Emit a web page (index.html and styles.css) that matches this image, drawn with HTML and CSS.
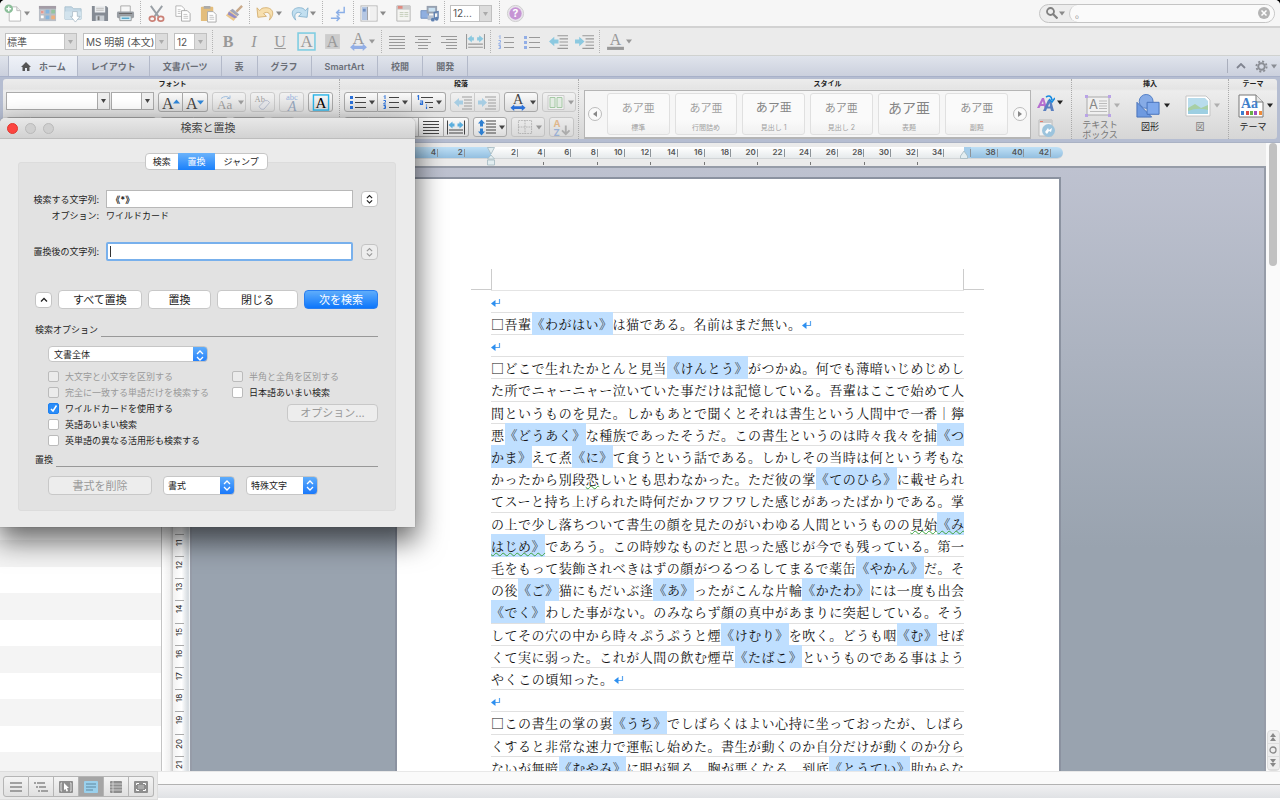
FILE: index.html
```html
<!DOCTYPE html>
<html lang="ja">
<head>
<meta charset="utf-8">
<title>検索と置換</title>
<link rel="stylesheet" href="styles.css">
</head>
<body>
<svg class="sprite" aria-hidden="true">
  <symbol id="caret" viewBox="0 0 6 5"><path d="M0 .5h6L3 4.5z" fill="currentColor"/></symbol>
  <symbol id="updown" viewBox="0 0 8 10"><path d="M1 4l3-3 3 3M1 6.500l3 3 3-3" fill="none" stroke="currentColor" stroke-width="1.300"/></symbol>
  <symbol id="new" viewBox="0 0 20 20"><path d="M5.500 3h8l4 4v11h-12z" fill="#fff" stroke="#bbb"/><path d="M13.500 3v4h4" fill="#eee" stroke="#bbb"/><circle cx="5" cy="5" r="4.500" fill="#8cbf9a"/><path d="M5 2.500v5M2.500 5h5" stroke="#fff" stroke-width="1.600"/></symbol>
  <symbol id="gallery" viewBox="0 0 20 20"><rect x="1" y="2" width="18" height="16" fill="#b9bec6"/><path d="M1 2h18v3H1z" fill="#a39ca6"/><path d="M3 7h3v3H3zM3 12h3v3H3z" fill="#fff"/><path d="M8 6h4v4H8zM8 12h4v4H8z" fill="#85b5df"/><path d="M14 6h4v4h-4z" fill="#93c49e"/><path d="M14 12h4v4h-4z" fill="#edb07e"/><path d="M3 7h3v3H3z" fill="#e59a90"/></symbol>
  <symbol id="open" viewBox="0 0 20 20"><path d="M1 3h7l2 2h8v11H1z" fill="#c5d9e6" stroke="#a9c1d0"/><path d="M1 8h17v8H1z" fill="#d2e3ed"/><path d="M9 8h5v5h3l-5 6-5-6h2z" fill="#fff" stroke="#a7b8c4" stroke-width=".8"/></symbol>
  <symbol id="save" viewBox="0 0 20 20"><path d="M2 2h15l2 2v14H2z" fill="#858b94"/><path d="M5 2h11v7H5z" fill="#eceef0"/><path d="M6 12h9v6H6z" fill="#c9ced4"/><path d="M8 13h2v4H8z" fill="#777"/><path d="M6.500 4.500h8M6.500 6.500h8" stroke="#bbb"/></symbol>
  <symbol id="print" viewBox="0 0 20 20"><path d="M5 2h10v7H5z" fill="#f7f7f7" stroke="#aaa"/><rect x="1" y="8" width="18" height="7" rx="1.500" fill="#9a9fa5"/><path d="M3 10h14" stroke="#666"/><path d="M4 12.500h12v5H4z" fill="#d5ecf5" stroke="#999"/><path d="M6 15h8" stroke="#5aa9cc" stroke-width="1.500"/></symbol>
  <symbol id="cut" viewBox="0 0 20 20"><path d="M4 2l8 11M16 2L8 13" stroke="#9aa0a6" stroke-width="2"/><ellipse cx="5.500" cy="15.500" rx="3" ry="2.500" fill="none" stroke="#cb8076" stroke-width="1.800"/><ellipse cx="14.500" cy="15.500" rx="3" ry="2.500" fill="none" stroke="#cb8076" stroke-width="1.800"/></symbol>
  <symbol id="copy" viewBox="0 0 20 20"><path d="M3 2h6l3 3v8H3z" fill="#fff" stroke="#b5b5b5"/><path d="M9 7h6l3 3v8H9z" fill="#fff" stroke="#aaa"/><path d="M5 6h3M5 8h3M5 10h3M11 11h4M11 13h5M11 15h5" stroke="#c5c5c5"/></symbol>
  <symbol id="paste" viewBox="0 0 20 20"><rect x="2" y="3" width="13" height="15" rx="1" fill="#e3bd7c"/><path d="M5 2h7v3H5z" fill="#aaa"/><path d="M9 8h6l3 3v8H9z" fill="#fff" stroke="#aaa"/><path d="M11 12h4M11 14h5M11 16h5" stroke="#c5c5c5"/></symbol>
  <symbol id="brush" viewBox="0 0 20 20"><path d="M18 2l-6 6" stroke="#c9a98a" stroke-width="2.500"/><path d="M8 5l7 6-2 2-8-6z" fill="#a3a6b8"/><path d="M5 7l8 6-4 5-8-6z" fill="#ebc78e"/><path d="M4 8l9 6-3 1-7-4z" fill="#938cc8"/></symbol>
  <symbol id="undo" viewBox="0 0 20 20"><path d="M1 4l1 10 9-1-3-3c4-3 9 0 6 7 7-7 3-14-5-13-2 0-4 1-5 3z" fill="#f7dfae" stroke="#d2ab6a" stroke-width=".9"/></symbol>
  <symbol id="redo" viewBox="0 0 20 20"><path d="M19 4l-1 10-9-1 3-3c-4-3-9 0-6 7-7-7-3-14 5-13 2 0 4 1 5 3z" fill="#c2dff0" stroke="#82b0cc" stroke-width=".9"/></symbol>
  <symbol id="marks" viewBox="0 0 20 20"><path d="M16 3v6H8M11 6L8 9l3 3M2 15h9M8 12l3 3-3 3" fill="none" stroke="#8aaee6" stroke-width="1.500"/></symbol>
  <symbol id="panel" viewBox="0 0 20 20"><rect x="1" y="2" width="17" height="16" fill="#fff" stroke="#b5b5b5"/><path d="M2 3h6v14H2z" fill="#b5c7e3"/><path d="M3 5h3v3H3z" fill="#6f8fc2"/><path d="M8 3v14" stroke="#999"/><path d="M10 3h7v14h-7z" fill="#f0f0f0"/></symbol>
  <symbol id="docbox" viewBox="0 0 20 20"><path d="M3 2h14v16H3z" fill="#f4f4f1" stroke="#b5b5b5"/><path d="M3 2h14v4H3z" fill="#ccc"/><path d="M4 2h5v3H4z" fill="#df8b81"/><path d="M6 9h4M11 9h4M6 11h4M11 11h4M6 13h4M11 13h4" stroke="#c4ceb9"/></symbol>
  <symbol id="media" viewBox="0 0 20 20"><path d="M1 7h8v8H1z" fill="#8fafe0" stroke="#7593c0"/><path d="M7 2h11v8H7z" fill="#97a1b0"/><path d="M9 4h7v4H9z" fill="#c9e1f2"/><path d="M8 12h6v5H8z" fill="#b9c3d1"/><path d="M15 16V9l4-1v7" fill="none" stroke="#5f80b0" stroke-width="1.500"/><circle cx="13.500" cy="16.500" r="2" fill="#5f80b0"/><circle cx="17.500" cy="15.500" r="2" fill="#5f80b0"/></symbol>
  <symbol id="help" viewBox="0 0 20 20"><circle cx="10" cy="10" r="8.500" fill="#e9e4ec" stroke="#ccc"/><circle cx="10" cy="10" r="6.500" fill="#c694d4"/><text x="10" y="14" font-size="11" text-anchor="middle" font-weight="bold" fill="#fff">?</text></symbol>
  <symbol id="lines" viewBox="0 0 16 14"><path d="M0 1.500h16M0 4.500h16M0 7.500h16M0 10.500h16M0 13.500h16" stroke="currentColor"/></symbol>
  <symbol id="linesc" viewBox="0 0 16 14"><path d="M0 1.500h16M3 4.500h10M0 7.500h16M3 10.500h10M3 13.500h10" stroke="currentColor"/></symbol>
  <symbol id="linesr" viewBox="0 0 16 14"><path d="M0 1.500h16M5 4.500h11M0 7.500h16M5 10.500h11M5 13.500h11" stroke="currentColor"/></symbol>
  <symbol id="dist" viewBox="0 0 18 14"><path d="M.5 0v14M17.500 0v14M2 9.500h14M2 12.500h14" stroke="currentColor"/><path d="M1.500 4.500l4-3.500v2h2v3h-2v2zM16.500 4.500l-4-3.500v2h-2v3h2v2z" fill="var(--arrow)"/></symbol>
  <symbol id="numlist" viewBox="0 0 16 14"><path d="M6 2.500h10M6 7.500h10M6 12.500h10" stroke="currentColor"/><path d="M1 1.500l1-1V4M.5 5.500h2v1.500l-2 2h2.500M.5 10.500h2v3h-2M1 12h1.500" fill="none" stroke="var(--blue)"/></symbol>
  <symbol id="bullets" viewBox="0 0 16 14"><path d="M5 2.500h11M5 7.500h11M5 12.500h11" stroke="currentColor"/><path d="M0 1h3v3H0zM0 6h3v3H0zM0 11h3v3H0z" fill="var(--blue)"/></symbol>
  <symbol id="multi" viewBox="0 0 16 14"><path d="M4 2.500h12M8 7.500h8M12 12.500h4" stroke="currentColor"/><path d="M.5 1.500l1-1V5M3 6h2.500v3.500H3.500V8h2M9.500 9.500v1M9.500 11.500V14" fill="none" stroke="var(--blue)" stroke-width="1.200"/></symbol>
  <symbol id="outdent" viewBox="0 0 18 14"><path d="M8 1.500h10M10 4.500h8M10 7.500h8M10 10.500h8M8 13.500h10" stroke="currentColor"/><path d="M0 7l5-4.500V5h4v4H5v2.500z" fill="var(--arrow)"/></symbol>
  <symbol id="indent" viewBox="0 0 18 14"><path d="M7 1.500h11M10 4.500h8M10 7.500h8M10 10.500h8M7 13.500h11" stroke="currentColor"/><path d="M9 7L4 2.500V5H0v4h4v2.500z" fill="var(--arrow)"/></symbol>
  <symbol id="awide" viewBox="0 0 16 18"><text x="8" y="11" font-family="Liberation Serif" font-size="15" text-anchor="middle" fill="currentColor">A</text><path d="M0 14.500l4-3.500v2h8v-2l4 3.500-4 3.500v-2H4v2z" fill="var(--blue)"/></symbol>
  <symbol id="acolor" viewBox="0 0 18 18"><text x="9" y="12" font-family="Liberation Serif" font-size="15" text-anchor="middle" fill="currentColor">A</text><path d="M1 14h16v3H1z" fill="currentColor"/></symbol>
  <symbol id="abox" viewBox="0 0 18 18"><rect x="1" y="1" width="16" height="16" fill="none" stroke="var(--cyan)" stroke-width="1.500"/><text x="9" y="14.500" font-family="Liberation Serif" font-size="16" text-anchor="middle" fill="currentColor">A</text></symbol>
  <symbol id="ashade" viewBox="0 0 18 18"><path d="M2 2h14v14H2z" fill="#ccc"/><text x="9" y="14" font-family="Liberation Serif" font-size="15" text-anchor="middle" fill="currentColor">A</text></symbol>
  <symbol id="agrow" viewBox="0 0 18 16"><text x="0" y="14" font-family="Liberation Serif" font-size="16" fill="currentColor">A</text><path d="M11 9h7l-3.500-4z" fill="#2f86d8"/></symbol>
  <symbol id="ashrink" viewBox="0 0 18 16"><text x="0" y="14" font-family="Liberation Serif" font-size="16" fill="currentColor">A</text><path d="M11 6h7l-3.500 4z" fill="#2f86d8"/></symbol>
  <symbol id="acase" viewBox="0 0 18 16"><text x="0" y="14" font-family="Liberation Serif" font-size="13" fill="currentColor">Aa</text><path d="M4 4q5-4 9 0M13 1v3h-3" fill="none" stroke="#4a8bd0"/></symbol>
  <symbol id="eraser" viewBox="0 0 18 18"><text x="0" y="8" font-family="Liberation Serif" font-size="9" fill="currentColor">Ab</text><path d="M5 13l6-6q3-1 5 2l-6 7q-4 1-5-3z" fill="#e8eaf2" stroke="#7787ad"/></symbol>
  <symbol id="ruby" viewBox="0 0 18 18"><text x="9" y="6" font-family="Liberation Serif" font-size="9" text-anchor="middle" fill="#2c6fd0">abc</text><text x="9" y="18" font-family="Liberation Serif" font-size="15" font-style="italic" text-anchor="middle" fill="#34598c">A</text></symbol>
  <symbol id="columns" viewBox="0 0 18 16"><path d="M1 1h16v14H1z" fill="#fff" stroke="#aaa"/><path d="M3 3h5v10H3zM10 3h5v10h-5z" fill="#dff0df" stroke="#52a552"/></symbol>
  <symbol id="spacing" viewBox="0 0 18 16"><path d="M8 1.500h10M8 4.500h10M8 7.500h10M8 10.500h10M8 13.500h10" stroke="currentColor"/><path d="M3.500 0l3.500 4H5v3H2V4H0zM3.500 16L0 12h2V9h3v3h2z" fill="#2f7fd0"/></symbol>
  <symbol id="borders" viewBox="0 0 16 16"><path d="M.5.500h15v15H.5zM8 0v16M0 8h16" fill="none" stroke="#777" stroke-dasharray="2 1"/></symbol>
  <symbol id="sort" viewBox="0 0 18 18"><text x="0" y="8" font-size="10" font-weight="bold" fill="#e38b2c">A</text><text x="0" y="18" font-size="10" font-weight="bold" fill="#4c7fd0">Z</text><path d="M13 7v8M9 12l4 4 4-4" fill="none" stroke="#777" stroke-width="2"/></symbol>
  <symbol id="styles" viewBox="0 0 18 18"><path d="M0 14L5 4h2l3 10H7.500l-.5-2H3.500l-1 2zM4.500 10h2L6 7z" fill="#b66fd0"/><path d="M6 17l5-11h3l3 11h-3l-.6-2.500H10L9 17zM11 12.500h2l-.5-3.500z" fill="#5a7fc0"/><path d="M9 3q5-3 6 3M12 5l3 3 3-4" fill="none" stroke="#168ae0" stroke-width="1.600"/></symbol>
  <symbol id="styledoc" viewBox="0 0 18 18"><path d="M2 1h13v16H2z" fill="#f2f2f2" stroke="#bbb"/><path d="M2 1h13v3H2z" fill="#ccc"/><path d="M3 2h3v1H3z" fill="#e57b6a"/><circle cx="11.500" cy="11.500" r="6.500" fill="#9cc4dd"/><path d="M8 13l3-4 1 2 3-2-1 4-2-1-2 3z" fill="#fff"/></symbol>
  <symbol id="textbox" viewBox="0 0 26 22"><path d="M2 2h22v18H2z" fill="#f0f0f0" stroke="#aaa"/><text x="4" y="14" font-size="13" fill="#888">A</text><path d="M14 6h8M14 8.500h8M14 11h8M14 13.500h8M5 16.500h17" stroke="#bbb"/><path d="M0 0h3v3H0zM23 0h3v3h-3zM0 19h3v3H0zM23 19h3v3h-3z" fill="#b9a3e6"/></symbol>
  <symbol id="shapes" viewBox="0 0 26 26"><circle cx="11" cy="8" r="7.500" fill="#86abe6" stroke="#4e7cc4"/><path d="M1 9v16h16z" fill="#6e9ae0" stroke="#4470b8"/><path d="M12 9h13v13H12z" fill="#7fa9ec" stroke="#4470b8"/></symbol>
  <symbol id="picture" viewBox="0 0 26 22"><path d="M1 1h20l4 4v16H1z" fill="#fff" stroke="#c5c5c5"/><path d="M3 3h17l3 3v13H3z" fill="#b8dcec"/><path d="M3 13l7-4 6 4 7-3v9H3z" fill="#a8cfa5"/><path d="M3 16q10-4 20-1v4H3z" fill="#9dcfe2"/></symbol>
  <symbol id="theme" viewBox="0 0 26 24"><path d="M1 1h17l7 7v15H1z" fill="#fff" stroke="#777"/><path d="M18 1v7h7" fill="#e8e8e8" stroke="#777"/><text x="3" y="14" font-family="Liberation Serif" font-size="14" font-weight="bold" fill="#3f7fcb">Aa</text><path d="M3 17h3v4H3z" fill="#3b7ed0"/><path d="M8 17h3v4H8z" fill="#d84b45"/><path d="M12 17h3v4h-3z" fill="#69b04a"/><path d="M16 17h3v4h-3z" fill="#a04fc0"/><path d="M21 17h3v4h-3z" fill="#ef8b38"/></symbol>
  <symbol id="gear" viewBox="0 0 14 14"><circle cx="7" cy="7" r="3.500" fill="none" stroke="#8a8d94" stroke-width="2"/><circle cx="7" cy="7" r="5.500" fill="none" stroke="#8a8d94" stroke-width="2" stroke-dasharray="2.160 2.160"/></symbol>
  <symbol id="home" viewBox="0 0 10 9"><path d="M5 0l5 5H8.500v4H6V6H4v3H1.500V5H0z" fill="#555"/></symbol>
  <symbol id="lens" viewBox="0 0 12 12"><circle cx="4.500" cy="4.500" r="3.500" fill="none" stroke="#808080" stroke-width="1.800"/><path d="M7 7l4.500 4.500" stroke="#808080" stroke-width="2.200"/></symbol>
  <symbol id="ret" viewBox="0 0 10 8"><path d="M8.500 0v4.500H4" fill="none" stroke="#5aa5ee" stroke-width="1.200"/><path d="M0 4.500L4.500 1v7z" fill="#2d8ff0"/></symbol>
</svg>

<div class="app">
  <div class="bar bar-main">
    <button class="ic" aria-label="新規"><svg><use href="#new"/></svg></button><span class="cr"><svg><use href="#caret"/></svg></span>
    <button class="ic" aria-label="ギャラリー"><svg><use href="#gallery"/></svg></button>
    <button class="ic" aria-label="開く"><svg><use href="#open"/></svg></button>
    <button class="ic" aria-label="保存"><svg><use href="#save"/></svg></button>
    <button class="ic" aria-label="印刷"><svg><use href="#print"/></svg></button>
    <i class="sep"></i>
    <button class="ic" aria-label="切り取り"><svg><use href="#cut"/></svg></button>
    <button class="ic" aria-label="コピー"><svg><use href="#copy"/></svg></button>
    <button class="ic" aria-label="貼り付け"><svg><use href="#paste"/></svg></button>
    <button class="ic" aria-label="書式のコピー"><svg><use href="#brush"/></svg></button>
    <i class="sep"></i>
    <button class="ic" aria-label="元に戻す"><svg><use href="#undo"/></svg></button><span class="cr"><svg><use href="#caret"/></svg></span>
    <button class="ic" aria-label="やり直し"><svg><use href="#redo"/></svg></button><span class="cr"><svg><use href="#caret"/></svg></span>
    <i class="sep"></i>
    <button class="ic" aria-label="編集記号"><svg><use href="#marks"/></svg></button>
    <i class="sep"></i>
    <button class="ic" aria-label="サイドバー"><svg><use href="#panel"/></svg></button><span class="cr"><svg><use href="#caret"/></svg></span>
    <button class="ic" aria-label="ツールボックス"><svg><use href="#docbox"/></svg></button>
    <button class="ic" aria-label="メディア"><svg><use href="#media"/></svg></button>
    <i class="sep"></i>
    <select class="combo zoom" aria-label="ズーム"><option>12...</option></select>
    <i class="sep"></i>
    <button class="ic" aria-label="ヘルプ"><svg><use href="#help"/></svg></button>
    <div class="search">
      <span class="lens"><svg class="s12"><use href="#lens"/></svg><svg class="s6"><use href="#caret"/></svg></span>
      <input type="text" value="。" aria-label="検索">
      <button class="clear" aria-label="クリア"><svg viewBox="0 0 12 12"><circle cx="6" cy="6" r="6" fill="#b4b4b4"/><path d="M3.500 3.500l5 5M8.500 3.500l-5 5" stroke="#fff" stroke-width="1.500"/></svg></button>
    </div>
  </div>

  <div class="bar bar-format">
    <select class="combo w-style" aria-label="スタイル"><option>標準</option></select>
    <select class="combo w-font" aria-label="フォント"><option>MS 明朝 (本文)</option></select>
    <select class="combo w-size" aria-label="サイズ"><option>12</option></select>
    <i class="sep"></i>
    <button class="ic letter bold">B</button>
    <button class="ic letter ital">I</button>
    <button class="ic letter under">U</button>
    <button class="ic" aria-label="囲み線"><svg><use href="#abox"/></svg></button>
    <button class="ic" aria-label="網かけ"><svg><use href="#ashade"/></svg></button>
    <button class="ic" aria-label="拡大縮小"><svg><use href="#awide"/></svg></button><span class="cr"><svg><use href="#caret"/></svg></span>
    <i class="sep"></i>
    <button class="ic sm" aria-label="両端揃え"><svg><use href="#lines"/></svg></button>
    <button class="ic sm" aria-label="中央揃え"><svg><use href="#linesc"/></svg></button>
    <button class="ic sm" aria-label="右揃え"><svg><use href="#linesr"/></svg></button>
    <button class="ic" aria-label="均等割り付け"><svg><use href="#dist"/></svg></button>
    <i class="sep"></i>
    <button class="ic sm" aria-label="段落番号"><svg><use href="#numlist"/></svg></button>
    <button class="ic sm" aria-label="箇条書き"><svg><use href="#bullets"/></svg></button>
    <button class="ic" aria-label="インデント解除"><svg><use href="#outdent"/></svg></button>
    <button class="ic" aria-label="インデント"><svg><use href="#indent"/></svg></button>
    <i class="sep"></i>
    <button class="ic" aria-label="文字の色"><svg><use href="#acolor"/></svg></button><span class="cr"><svg><use href="#caret"/></svg></span>
  </div>

  <nav class="tabs">
    <button class="tab on"><svg><use href="#home"/></svg>ホーム</button>
    <button class="tab">レイアウト</button>
    <button class="tab">文書パーツ</button>
    <button class="tab">表</button>
    <button class="tab">グラフ</button>
    <button class="tab">SmartArt</button>
    <button class="tab">校閲</button>
    <button class="tab">開発</button>
    <span class="tab-end">
      <svg class="chev" viewBox="0 0 10 6"><path d="M1 5l4-4 4 4" fill="none" stroke="#808490" stroke-width="1.800"/></svg>
      <svg class="gear"><use href="#gear"/></svg><svg class="s6"><use href="#caret"/></svg>
    </span>
  </nav>

  <div class="ribbon">
    <section class="group g-font">
      <h2>フォント</h2>
      <div class="row">
        <select class="combo2 wide" aria-label="フォント名"><option></option></select>
        <select class="combo2" aria-label="フォントサイズ"><option></option></select>
        <span class="btns"><button aria-label="拡大"><svg><use href="#agrow"/></svg></button><button aria-label="縮小"><svg><use href="#ashrink"/></svg></button></span>
        <span class="btns off"><button class="mid" aria-label="文字種"><svg><use href="#acase"/></svg><svg class="s6"><use href="#caret"/></svg></button></span>
        <span class="btns off"><button aria-label="書式クリア"><svg><use href="#eraser"/></svg></button></span>
        <span class="btns off"><button aria-label="ルビ"><svg><use href="#ruby"/></svg></button></span>
        <span class="btns strong"><button aria-label="囲み"><svg><use href="#abox"/></svg></button></span>
      </div>
      <div class="row">
        <span class="btns"><button aria-label="太字"></button><button aria-label="斜体"></button><button aria-label="下線"></button><button aria-label="取り消し線"></button><button aria-label="上付き"></button><button aria-label="下付き"></button></span>
        <span class="btns"><button class="mid" aria-label="色"></button><button class="mid" aria-label="蛍光ペン"></button></span>
        <span class="btns"><button class="mid" aria-label="効果"></button></span>
        <span class="btns off"><button aria-label="囲い文字"></button></span>
      </div>
    </section>
    <section class="group g-para">
      <h2>段落</h2>
      <div class="row">
        <span class="btns"><button class="mid" aria-label="箇条書き"><svg class="g16"><use href="#bullets"/></svg><svg class="s6"><use href="#caret"/></svg></button><button class="mid" aria-label="段落番号"><svg class="g16"><use href="#numlist"/></svg><svg class="s6"><use href="#caret"/></svg></button><button class="mid" aria-label="アウトライン"><svg class="g16"><use href="#multi"/></svg><svg class="s6"><use href="#caret"/></svg></button></span>
        <span class="btns off"><button aria-label="インデント解除"><svg><use href="#outdent"/></svg></button><button aria-label="インデント"><svg><use href="#indent"/></svg></button></span>
        <span class="btns"><button class="mid" aria-label="文字幅"><svg><use href="#awide"/></svg><svg class="s6"><use href="#caret"/></svg></button></span>
        <span class="btns off"><button class="mid" aria-label="段組み"><svg><use href="#columns"/></svg><svg class="s6"><use href="#caret"/></svg></button></span>
      </div>
      <div class="row">
        <span class="btns"><button aria-label="左揃え"><svg class="g16"><use href="#lines"/></svg></button><button aria-label="中央"><svg class="g16"><use href="#linesc"/></svg></button><button aria-label="右揃え"><svg class="g16"><use href="#linesr"/></svg></button><button aria-label="両端"><svg class="g16"><use href="#lines"/></svg></button><button aria-label="均等"><svg><use href="#dist"/></svg></button></span>
        <span class="btns"><button class="mid" aria-label="行間"><svg><use href="#spacing"/></svg><svg class="s6"><use href="#caret"/></svg></button></span>
        <span class="btns off"><button class="mid" aria-label="罫線"><svg class="g16"><use href="#borders"/></svg><svg class="s6"><use href="#caret"/></svg></button></span>
        <span class="btns off"><button aria-label="並べ替え"><svg><use href="#sort"/></svg></button></span>
      </div>
    </section>
    <section class="group g-style">
      <h2>スタイル</h2>
      <div class="style-row">
        <div class="gallery">
          <button class="round" aria-label="前へ"><svg viewBox="0 0 14 14"><circle cx="7" cy="7" r="6.500" fill="#fafafa" stroke="#bbb"/><path d="M9 4v6L5 7z" fill="#888"/></svg></button>
          <button class="card c1"><b>あア亜</b><span>標準</span></button>
          <button class="card c1"><b>あア亜</b><span>行間詰め</span></button>
          <button class="card c2"><b>あア亜</b><span>見出し 1</span></button>
          <button class="card c3"><b>あア亜</b><span>見出し 2</span></button>
          <button class="card c4"><b>あア亜</b><span>表題</span></button>
          <button class="card c3"><b>あア亜</b><span>副題</span></button>
          <button class="round" aria-label="次へ"><svg viewBox="0 0 14 14"><circle cx="7" cy="7" r="6.500" fill="#fafafa" stroke="#bbb"/><path d="M5 4v6l4-3z" fill="#888"/></svg></button>
        </div>
        <div class="style-tools">
          <button class="flat" aria-label="スタイル変更"><svg class="g18"><use href="#styles"/></svg><svg class="s6"><use href="#caret"/></svg></button>
          <button class="flat" aria-label="スタイルウィンドウ"><svg class="g18"><use href="#styledoc"/></svg></button>
        </div>
      </div>
    </section>
    <section class="group g-insert">
      <h2>挿入</h2>
      <div class="bigs">
        <button class="big dim two"><span><svg><use href="#textbox"/></svg><svg class="s6"><use href="#caret"/></svg></span>テキスト<br>ボックス</button>
        <button class="big"><span><svg><use href="#shapes"/></svg><svg class="s6"><use href="#caret"/></svg></span>図形</button>
        <button class="big dim"><span><svg><use href="#picture"/></svg><svg class="s6"><use href="#caret"/></svg></span>図</button>
      </div>
    </section>
    <section class="group g-theme">
      <h2>テーマ</h2>
      <div class="bigs">
        <button class="big"><span><svg><use href="#theme"/></svg><svg class="s6"><use href="#caret"/></svg></span>テーマ</button>
      </div>
    </section>
  </div>

  <main class="work">
    <aside class="side"></aside>
    <div class="split"></div>
    <div class="vruler">
      <span>10</span><span>11</span><span>12</span><span>13</span><span>14</span><span>15</span><span>16</span><span>17</span><span>18</span><span>19</span><span>20</span><span>21</span>
    </div>
    <div class="center">
      <div class="hruler">
        <div class="scale">
          <span class="m">8</span><span class="m">6</span><span class="m">4</span><span class="m">2</span><span class="m z"></span><span>2</span><span>4</span><span>6</span><span>8</span><span>10</span><span>12</span><span>14</span><span>16</span><span>18</span><span>20</span><span>22</span><span>24</span><span>26</span><span>28</span><span>30</span><span>32</span><span>34</span><span class="edge"></span><span class="m">38</span><span class="m">40</span><span class="m">42</span><span class="m cap"></span>
          <svg class="mark-l" viewBox="0 0 8 19"><path d="M.5.500h7L4 7zM4 8l3.500 4h-7zM.5 13h7v5h-7z" fill="#e2edf0" stroke="#a3b9c0" stroke-width=".8"/></svg>
          <svg class="mark-r" viewBox="0 0 8 8"><path d="M4 0l3.500 5v2.500h-7V5z" fill="#e2edf0" stroke="#a3b9c0" stroke-width=".8"/></svg>
        </div>
        <div class="ticks"><i></i><i></i><i></i><i></i><i></i><i></i><i></i><i></i></div>
      </div>
      <div class="canvas">
        <article class="page">
          <div class="corners"><i></i><i></i></div>
          <div class="text">
            <p class="part"><svg class="ret"><use href="#ret"/></svg></p>
            <p class="part"><span class="w23">□吾輩<mark>《わがはい》</mark>は猫である。名前はまだ無い。</span><svg class="ret"><use href="#ret"/></svg></p>
            <p class="part"><svg class="ret"><use href="#ret"/></svg></p>
            <p>□どこで生れたかとんと見当<mark>《けんとう》</mark>がつかぬ。何でも薄暗いじめじめし</p>
            <p>た所でニャーニャー泣いていた事だけは記憶している。吾輩はここで始めて人</p>
            <p>間というものを見た。しかもあとで聞くとそれは書生という人間中で一番｜獰</p>
            <p>悪<mark>《どうあく》</mark>な種族であったそうだ。この書生というのは時々我々を捕<mark>《つ</mark></p>
            <p><mark>かま》</mark>えて煮<mark>《に》</mark>て食うという話である。しかしその当時は何という考もな</p>
            <p>かったから別段<u>恐</u>しいとも思わなかった。ただ彼の掌<mark>《てのひら》</mark>に載せられ</p>
            <p>てスーと持ち上げられた時何だかフワフワした感じがあったばかりである。掌</p>
            <p>の上で少し落ちついて書生の顔を見たのがいわゆる人間というものの<u>見始<mark>《み</mark></u></p>
            <p><u><mark>はじめ》</mark></u>であろう。この時妙なものだと思った感じが今でも残っている。第一</p>
            <p>毛をもって装飾されべきはずの顔がつるつるしてまるで薬缶<mark>《やかん》</mark>だ。そ</p>
            <p>の後<mark>《ご》</mark>猫にもだいぶ逢<mark>《あ》</mark>ったがこんな片輪<mark>《かたわ》</mark>には一度も出会</p>
            <p><mark>《でく》</mark>わした事がない。のみならず顔の真中があまりに突起している。そう</p>
            <p>してその穴の中から時々ぷうぷうと煙<mark>《けむり》</mark>を吹く。どうも咽<mark>《む》</mark>せぽ</p>
            <p>くて実に弱った。これが人間の飲む煙草<mark>《たばこ》</mark>というものである事はよう</p>
            <p class="part"><span class="w9">やくこの頃知った。</span><svg class="ret"><use href="#ret"/></svg></p>
            <p class="part"><svg class="ret"><use href="#ret"/></svg></p>
            <p>□この書生の掌の裏<mark>《うち》</mark>でしばらくはよい心持に坐っておったが、しばら</p>
            <p>くすると非常な速力で運転し始めた。書生が動くのか自分だけが動くのか分ら</p>
            <p>ないが無暗<mark>《むやみ》</mark>に眼が廻る。胸が悪くなる。到底<mark>《とうてい》</mark>助からな</p>
          </div>
        </article>
      </div>
    </div>
    <div class="vscroll">
      <i class="thumb"></i>
      <div class="nav">
        <button aria-label="前のページ"><svg viewBox="0 0 8 8"><path d="M4 0l3 4H1zM4 4l3 4H1z" fill="#888"/></svg></button>
        <button aria-label="参照"><svg viewBox="0 0 8 8"><circle cx="4" cy="4" r="3" fill="none" stroke="#888" stroke-width="1.300"/></svg></button>
        <button aria-label="次のページ"><svg viewBox="0 0 8 8"><path d="M4 8L1 4h6zM4 4L1 0h6z" fill="#888"/></svg></button>
      </div>
    </div>
  </main>

  <footer class="foot">
    <div class="views">
      <button aria-label="下書き"><svg viewBox="0 0 14 12"><path d="M1 2h12M1 6h12M1 10h12" stroke="#888" stroke-width="1.300"/></svg></button>
      <button aria-label="アウトライン"><svg viewBox="0 0 14 12"><path d="M0 2h2M3 2h8M2 6h2M5 6h7M4 10h2M7 10h7" stroke="#888" stroke-width="1.300"/></svg></button>
      <button aria-label="発行"><svg viewBox="0 0 14 12"><rect width="14" height="12" rx="1" fill="#8e8e8e"/><path d="M3 2H2v8h1M11 2h1v8h-1" stroke="#ddd" fill="none"/><path d="M5 2l5 5H8l1 3-1.500.5L6.500 8 5 9z" fill="#fff"/></svg></button>
      <button class="on" aria-label="印刷レイアウト"><svg viewBox="0 0 14 12"><rect width="14" height="12" rx="1" fill="#9ad0ec"/><path d="M2 3h10M2 6h10M2 9h7" stroke="#5e88a0"/></svg></button>
      <button aria-label="ノート"><svg viewBox="0 0 14 12"><rect x="1" width="12" height="12" rx="1" fill="#8e8e8e"/><path d="M1 3h12M1 6h12M1 9h12M4 0v12" stroke="#ddd" stroke-width=".8"/></svg></button>
      <button aria-label="全画面"><svg viewBox="0 0 14 12"><rect width="14" height="12" rx="1" fill="#8e8e8e"/><path d="M2.500 4V2.500H5M9 2.500h2.500V4M11.500 8v1.500H9M5 9.500H2.500V8" stroke="#fff" fill="none"/><rect x="4" y="4" width="6" height="4" fill="#aaa"/></svg></button>
    </div>
    <div class="status"></div>
  </footer>
</div>

<form class="dialog" role="dialog" aria-labelledby="dlg">
  <header class="title"><i class="dot red"></i><i class="dot"></i><i class="dot"></i><h1 id="dlg">検索と置換</h1></header>
  <div class="seg"><button type="button">検索</button><button type="button" class="on">置換</button><button type="button">ジャンプ</button></div>
  <div class="pane">
    <div class="field"><label for="find">検索する文字列:</label><input id="find" type="text" value=" 《*》"><button type="button" class="pop" aria-label="履歴"><svg><use href="#updown"/></svg></button></div>
    <div class="field note"><span>オプション:</span><span>ワイルドカード</span></div>
    <div class="field second"><label for="repl">置換後の文字列:</label><span class="focus"><input id="repl" type="text"><i></i></span><button type="button" class="pop" disabled aria-label="履歴"><svg><use href="#updown"/></svg></button></div>
    <div class="actions">
      <button type="button" class="tog" aria-label="折りたたむ"><svg viewBox="0 0 8 5"><path d="M1 4.500l3-3 3 3" fill="none" stroke="#222" stroke-width="1.300"/></svg></button>
      <button type="button" class="btn a">すべて置換</button><button type="button" class="btn b">置換</button><button type="button" class="btn c">閉じる</button><button type="button" class="btn d prime">次を検索</button>
    </div>
    <h3>検索オプション</h3>
    <div class="opts">
      <select class="mac scope" aria-label="検索範囲"><option>文書全体</option></select>
      <div class="cols">
        <div class="checks">
          <label class="no"><input type="checkbox" disabled>大文字と小文字を区別する</label>
          <label class="no"><input type="checkbox" disabled>完全に一致する単語だけを検索する</label>
          <label><input type="checkbox" checked>ワイルドカードを使用する</label>
          <label><input type="checkbox">英語あいまい検索</label>
          <label><input type="checkbox">英単語の異なる活用形も検索する</label>
        </div>
        <div class="checks right">
          <label class="no"><input type="checkbox" disabled>半角と全角を区別する</label>
          <label><input type="checkbox">日本語あいまい検索</label>
          <button type="button" class="btn" disabled>オプション...</button>
        </div>
      </div>
    </div>
    <h3 class="thick">置換</h3>
    <div class="last">
      <button type="button" class="btn" disabled>書式を削除</button>
      <select class="mac" aria-label="書式"><option>書式</option></select>
      <select class="mac" aria-label="特殊文字"><option>特殊文字</option></select>
    </div>
  </div>
</form>
</body>
</html>
```
FILE: styles.css
```css
* { box-sizing: border-box; }
body {
  margin: 0;
  background: #000;
  font-family: Inter, "Noto Sans CJK JP", sans-serif;
  font-size: 9px;
  color: #222;
  overflow: hidden;
  --blue: #2a70d8;
  --arrow: #5aaede;
  --cyan: #2cb5e8;
}
button, input, select { font: inherit; color: inherit; margin: 0; padding: 0; border: 0; background: none; border-radius: 0; }
button { display: flex; align-items: center; justify-content: center; }
select { appearance: none; }
h1, h2, h3, p { margin: 0; font-weight: normal; }
svg { display: block; flex: none; }
.sprite { display: none; }
.s6 { width: 6px; height: 5px; }
.s12 { width: 12px; height: 12px; }
.app { height: 100vh; display: flex; flex-direction: column; background: #ebebeb; border-radius: 5px 5px 0 0; overflow: hidden; }

/* toolbars */
.bar { display: flex; align-items: center; flex: none; height: 28px; color: #8a8a8a; --blue: #92aee6; --arrow: #8cc9e0; --cyan: #7fcde2; }
.bar-main { background: #f6f6f6; border-bottom: 2px solid #d2d2d2; }
.bar-format { background: #ebebeb; padding-left: 5px; border-bottom: 1px solid #d0d2d0; color: #999; }
.ic { width: 26px; height: 22px; }
.ic svg { width: 19px; height: 19px; }
.ic.sm svg { width: 16px; height: 14px; }
.letter { font-family: "Liberation Serif", serif; font-size: 16px; }
.bold { font-weight: bold; }
.ital { font-style: italic; }
.under { text-decoration: underline; }
.cr { width: 8px; }
.cr svg { width: 6px; height: 5px; margin-left: -2px; }
.sep { width: 5px; height: 24px; flex: none; background: repeating-linear-gradient(#b4b4b4 0 1px, transparent 1px 2px) 2px 0 / 1px 100% no-repeat; }
.combo {
  height: 17px; border: 1px solid #c0c0c0; padding-left: 1px; color: #555; font-size: 10px;
  background: url("data:image/svg+xml,%3Csvg xmlns='http://www.w3.org/2000/svg' width='12' height='17'%3E%3Cpath fill='%23dcdcdc' stroke='%23c4c4c4' d='M.5-1h13v20H.5z'/%3E%3Cpath fill='%23aaa' d='M4 6h5L6.500 10z'/%3E%3C/svg%3E") right top no-repeat #fff;
}
.zoom { width: 42px; margin: 0 5px 0 3px; padding-left: 2px; }
.w-style { width: 72px; margin-right: 6px; }
.w-font { width: 85px; margin-right: 6px; padding-left: 2px; }
.w-size { width: 33px; margin-right: 3px; padding-left: 2px; }
.search { margin-left: auto; margin-right: 5px; width: 236px; height: 19px; border: 1px solid #c4c4c4; border-radius: 10px; display: flex; align-items: center; background: #ededed; overflow: hidden; }
.lens { width: 29px; display: flex; align-items: center; justify-content: center; padding-left: 1px; gap: 1px; }
.search input { flex: 1; min-width: 0; height: 17px; border-left: 1px solid #ccc; border-radius: 9px 0 0 9px; background: #fafafa; padding-left: 5px; font-size: 10px; }
.clear { width: 20px; height: 17px; background: #fafafa; }
.clear svg { width: 12px; height: 12px; }

/* tabs */
.tabs { display: flex; flex: none; height: 20px; padding-left: 9px; background: linear-gradient(#e0e4ec, #cbd0dd); color: #6a6e77; }
.tab { padding: 0 13px; border-right: 1px solid #b3b9c9; font-weight: 600; }
.tab.on { background: linear-gradient(#eff2f8, #dfe4ee); gap: 8px; padding: 0 11px 0 12px; box-shadow: -1px 0 #b3b9c9; }
.tab svg { width: 10px; height: 9px; }
.tab-end { margin-left: auto; display: flex; align-items: center; padding-right: 3px; color: #8a8d94; }
.tab-end::before { content: ""; width: 1px; height: 14px; background: #aaafbd; margin-right: 8px; }
.chev { width: 10px; height: 6px; }
.gear { width: 13px; height: 13px; margin: 0 3px 0 9px; }

/* ribbon */
.ribbon { flex: none; display: flex; height: 66px; padding: 2px 3px 3px; background: #b5bdd1; border-top: 1px solid #a8b1c9; }
.group { background: linear-gradient(#ececec, #e4e4e4 10px, #ededed 12px, #d6d6d6); border-right: 1px dotted #aaa; }
.group h2 { height: 10px; line-height: 10px; font-size: 7px; font-weight: bold; text-align: center; }
.g-font { width: 337px; padding-left: 3px; border-radius: 3px 0 0 0; }
.g-para { width: 239px; padding-left: 4px; }
.g-style { flex: 1; min-width: 0; padding-left: 5px; }
.g-insert { width: 157px; }
.g-theme { width: 48px; border: 0; border-radius: 0 3px 3px 0; }
.row { display: flex; gap: 4px; height: 20px; margin-top: 3px; }
.row + .row { margin-top: 5px; }
.combo2 {
  width: 43px; height: 18px; border: 1px solid #aaa;
  background: url("data:image/svg+xml,%3Csvg xmlns='http://www.w3.org/2000/svg' width='12' height='18'%3E%3Cpath fill='%23eee' stroke='%23aaa' d='M.5-1h13v20H.5z'/%3E%3Cpath fill='%23444' d='M4 6h5L6.500 10z'/%3E%3C/svg%3E") right top no-repeat #fff;
}
.combo2.wide { width: 104px; margin-right: -3px; }
.btns { display: flex; }
.btns button { width: 25px; height: 20px; border: 1px solid #a8a8a8; border-left-width: 0; background: linear-gradient(#fafafa, #dcdcdc); color: #444; }
.btns button:first-child { border-left-width: 1px; border-radius: 3px 0 0 3px; }
.btns button:last-child { border-radius: 0 3px 3px 0; }
.btns button:only-child { border-radius: 3px; }
.btns .mid { width: 34px; gap: 3px; }
.btns svg { width: 18px; height: 17px; }
.btns .g16 { width: 16px; height: 14px; }
.btns .s6 { width: 6px; height: 5px; margin-right: -2px; }
.btns.strong button { color: #000; }
.off { opacity: .45; }
.style-row { display: flex; gap: 6px; margin-top: 1px; }
.gallery { flex: 1; display: flex; align-items: center; gap: 5px; height: 49px; padding: 0 3px; background: #f6f6f6; border: 1px solid #b5b5b5; border-bottom-width: 2px; color: #a0a0a0; }
.round svg { width: 14px; height: 14px; }
.card { flex: 1; height: 42px; flex-direction: column; justify-content: space-between; border: 1px solid #e0e0e0; border-radius: 3px; background: linear-gradient(#fafafa 65%, #f1f1f1); }
.card b { line-height: 28px; font-size: 11px; font-weight: normal; }
.card span { line-height: 12px; font-size: 7px; }
.c2 b { font-size: 12px; color: #858585; }
.c3 b { color: #909090; }
.c4 b { font-size: 14px; color: #858585; }
.style-tools { width: 34px; }
.flat { height: 25px; gap: 2px; }
.g18 { width: 18px; height: 18px; }
.bigs { display: flex; justify-content: center; gap: 8px; padding-top: 4px; }
.big { flex-direction: column; justify-content: flex-start; width: 42px; line-height: 14px; white-space: nowrap; }
.big.two { line-height: 10px; }
.big span { display: flex; align-items: center; gap: 3px; height: 25px; margin-bottom: 2px; }
.big span svg:first-child { width: 26px; height: 24px; margin-left: 5px; }
.dim { color: #777; }
.dim .s6 { opacity: .5; }

/* workspace */
.work { flex: 1; min-height: 0; display: flex; border-top: 1px solid #aab2c4; }
.side { width: 162px; background: repeating-linear-gradient(#fff 0 26px, #f4f4f4 26px 53px); border-right: 1px solid #c4c4c4; }
.split { width: 11px; background: linear-gradient(90deg, #fff, #f0f0f0 70%, #c9c9c9); }
.vruler { width: 17px; padding-left: 2px; display: flex; flex-direction: column; justify-content: flex-end; overflow: hidden; background: linear-gradient(90deg, #f2f2f2, #fff 50%, #d3d9de 90%, #fff); }
.vruler span { flex: none; width: 9px; height: 22px; padding-bottom: 4px; border-bottom: 1px solid #aaa; writing-mode: vertical-rl; transform: rotate(180deg); line-height: 9px; font-size: 8px; text-align: right; }
.vruler span:nth-child(5n) { height: 23px; }
.vruler span:last-child { height: 15px; }
.center { flex: 1; min-width: 0; display: flex; flex-direction: column; }
.hruler { height: 23px; padding: 4px 0 0 168px; }
.scale { position: relative; display: flex; width: 705px; height: 12px; }
.scale span { flex: 1; background: linear-gradient(#fff, #e6eaec); border-bottom: 1px solid #d3d6d8; display: flex; align-items: center; justify-content: flex-end; font-size: 8px; font-weight: 600; color: #555; line-height: 11px; }
.scale span::after { content: ""; width: 1px; height: 8px; background: #8e9499; margin-left: 1px; }
.scale .m { background: linear-gradient(#bfe0f6, #93bfe0); }
.scale .z::after { display: none; }
.scale .edge { background: linear-gradient(90deg, transparent 73%, #a5cdea 73%), linear-gradient(#fff, #e6eaec); }
.scale .cap { flex: 0 0 12px; border-radius: 0 6px 6px 0; }
.scale .cap::after { display: none; }
.mark-l { position: absolute; left: 129px; top: 0; width: 8px; height: 19px; }
.mark-r { position: absolute; left: 602px; top: 4px; width: 8px; height: 8px; }
.ticks { display: flex; width: 427px; margin: 3px 0 0 133px; }
.ticks i { flex: 1; height: 3px; border-right: 1px solid #777; }
.canvas { flex: 1; min-height: 0; overflow: hidden; padding: 11px 0 0; background: linear-gradient(#bec2d0, #99a3af 380px); border: 2px solid #969ca8; border-width: 2px 2px 0 2px; }
.page { width: 662px; min-height: 100%; margin: 0 auto; padding: 90px 95px 0 94px; background: #fff; box-shadow: 0 0 0 2px #8b92a0; }
.corners { display: flex; justify-content: space-between; margin: 0 -20px; }
.corners i { width: 21px; height: 21px; border: 0 solid #ccc; border-width: 0 1px 1px 0; }
.corners i:last-child { border-width: 0 0 1px 1px; }
.text { border-top: 1px solid #e4e4e4; font-family: "Noto Serif CJK JP", "Noto Sans CJK JP", serif; font-size: 13px; color: #111; text-spacing-trim: space-all; }
.text p { height: 22px; line-height: 21px; border-bottom: 1px solid #e0e0e0; white-space: nowrap; text-align-last: justify; }
.text p:nth-child(5n) { height: 23px; line-height: 22px; }
.text .part { display: flex; align-items: center; }
.w23 { width: 310px; }
.w9 { width: 122px; }
.ret { width: 10px; height: 8px; margin-top: 2px; }
.part span + .ret { margin-left: 1px; }
mark { background: #bfdfff; color: inherit; padding: 2px 0; }
.text u { text-decoration: underline wavy #3ca33c 1px; text-underline-offset: 1px; }
.vscroll { width: 14px; background: #fafafa; display: flex; flex-direction: column; justify-content: space-between; align-items: center; }
.thumb { width: 8px; height: 123px; border-radius: 4px; background: #c1c1c1; }
.nav { width: 13px; border: 1px solid #ddd; border-radius: 4px; background: #eee; }
.nav button { width: 11px; height: 13px; border-bottom: 1px solid #ddd; }
.nav svg { width: 8px; height: 8px; }

/* bottom strip */
.foot { flex: none; height: 29px; display: flex; background: #fff; }
.views { width: 158px; padding: 4px 3px; display: flex; background: #e9e9e9; border: 1px solid #ddd; border-left: 0; }
.views button { flex: 1; height: 21px; border: 1px solid #b5b5b5; border-left-width: 0; background: linear-gradient(#f4f4f4, #e0e0e0); }
.views button:first-child { border-left-width: 1px; border-radius: 3px 0 0 3px; }
.views button:last-child { border-radius: 0 3px 3px 0; }
.views .on { background: #a5a5a5; }
.views svg { width: 14px; height: 12px; }
.status { flex: 1; margin-bottom: 2px; background: linear-gradient(#fafafa 12px, #b2b2b2 12px 13px, #f0f0f2 13px, #e0e2e5); border-top: 1px solid #e8e8e8; }

/* dialog */
.dialog { position: absolute; left: 0; top: 118px; width: 415px; padding-bottom: 16px; background: #ebebeb; border-radius: 5px 5px 0 0; box-shadow: 0 12px 28px 2px rgba(0, 0, 0, .6), 0 0 1px #777; }
.title { display: flex; align-items: center; gap: 7px; height: 21px; padding-left: 7px; background: linear-gradient(#e8e8e8, #d2d2d2); border-bottom: 1px solid #bdbdbd; border-radius: 5px 5px 0 0; }
.title h1 { flex: 1; text-align: center; padding-right: 60px; font-size: 11px; line-height: 20px; color: #444; }
.dot { width: 11px; height: 11px; border-radius: 50%; background: #cfcfcf; border: 1px solid #bababa; }
.dot.red { background: #fc4540; border-color: #e0382f; }
.seg { position: relative; display: flex; width: 123px; height: 17px; margin: 14px 0 -8px 145px; background: #fff; border: 1px solid #c6c6c6; border-radius: 4px; }
.seg button { flex: 32; }
.seg button:last-child { flex: 52; }
.seg .on { flex: 38; margin: -1px 0; background: linear-gradient(#6bb3fb, #1a80fb); color: #fff; }
.pane { margin: 0 19px 0 18px; padding: 27px 17px 15px; background: #e2e2e2; border: 1px solid #dcdcdc; border-radius: 3px; }
.field { display: flex; align-items: center; height: 18px; }
.field > :first-child { display: flex; justify-content: flex-end; width: 64px; margin: 0 7px 0 -1px; white-space: nowrap; }
.field input { flex: 1; min-width: 0; height: 18px; background: #fff; border: 1px solid #b8b8b8; padding-left: 2px; font-weight: bold; }
.note { height: 14px; }
.second { margin-top: 20px; height: 19px; }
.focus { flex: 1; display: flex; position: relative; border: 2px solid #78b0ec; border-radius: 2px; }
.focus input { height: 15px; border: 0; }
.focus i { position: absolute; left: 2px; top: 2px; width: 1px; height: 11px; background: #333; }
.pop, .tog { width: 17px; height: 16px; border-radius: 4px; background: #fff; border: 1px solid #c4c4c4; }
.pop { margin-left: 8px; }
.pop svg { width: 7px; height: 10px; }
.pop:disabled, .btn:disabled { background: #ededed; color: #999; }
.actions { display: flex; align-items: center; gap: 6px; margin: 29px 0 11px -1px; }
.tog svg { width: 8px; height: 5px; }
.btn { height: 19px; border-radius: 4px; background: #fff; border: 1px solid #c8c8c8; font-size: 11px; line-height: 16px; }
.a { flex: 84; }
.b { flex: 63; }
.c { flex: 81; }
.d { flex: 74; }
.prime { color: #fff; border-color: #2a7ff0; background: linear-gradient(#5fadfb, #0d76fb); }
.pane h3 { display: flex; align-items: flex-end; gap: 3px; height: 18px; font-size: 9px; line-height: 16px; margin-left: -1px; }
.pane h3::after { content: ""; flex: 1; height: 1px; background: #989898; margin-bottom: 1px; }
.opts, .last { margin-left: 12px; }
.mac {
  height: 17px; padding-left: 4px; border: 1px solid #c6c6c6; border-radius: 4px;
  background: url("data:image/svg+xml,%3Csvg xmlns='http://www.w3.org/2000/svg' width='14' height='20'%3E%3Cdefs%3E%3ClinearGradient id='g' x2='0' y2='1'%3E%3Cstop stop-color='%235fadfb'/%3E%3Cstop offset='1' stop-color='%230d6ffb'/%3E%3C/linearGradient%3E%3C/defs%3E%3Cpath fill='url(%23g)' d='M0 0h14v20H0z'/%3E%3Cpath fill='none' stroke='%23fff' stroke-width='1.300' d='M4 7l3-3 3 3M4 10l3 3 3-3'/%3E%3C/svg%3E") right top no-repeat #fff;
}
.scope { display: block; width: 160px; height: 16px; margin: 8px 0 6px; padding-left: 5px; }
.cols { display: flex; }
.checks { width: 184px; }
.checks label { display: flex; align-items: center; gap: 6px; height: 16px; white-space: nowrap; }
.checks .no { color: #999; }
.checks input { appearance: none; width: 11px; height: 11px; border: 1px solid #bbb; border-radius: 2px; background: #fff; }
.checks .no input { background: #ebebeb; }
.checks input:checked { border-color: #1c80f0; background: url("data:image/svg+xml,%3Csvg xmlns='http://www.w3.org/2000/svg' viewBox='0 0 9 9'%3E%3Cpath fill='none' stroke='%23fff' stroke-width='1.500' d='M2 5l2 2 3.500-5.500'/%3E%3C/svg%3E") #2a8cf8; }
.right { flex: 1; }
.right .btn { width: 91px; height: 18px; margin: 4px 0 0 auto; }
.thick { margin-top: 2px; }
.last { display: flex; gap: 11px; margin-top: 8px; }
.last .btn { width: 104px; }
.last .mac { width: 72px; height: 19px; }
```
